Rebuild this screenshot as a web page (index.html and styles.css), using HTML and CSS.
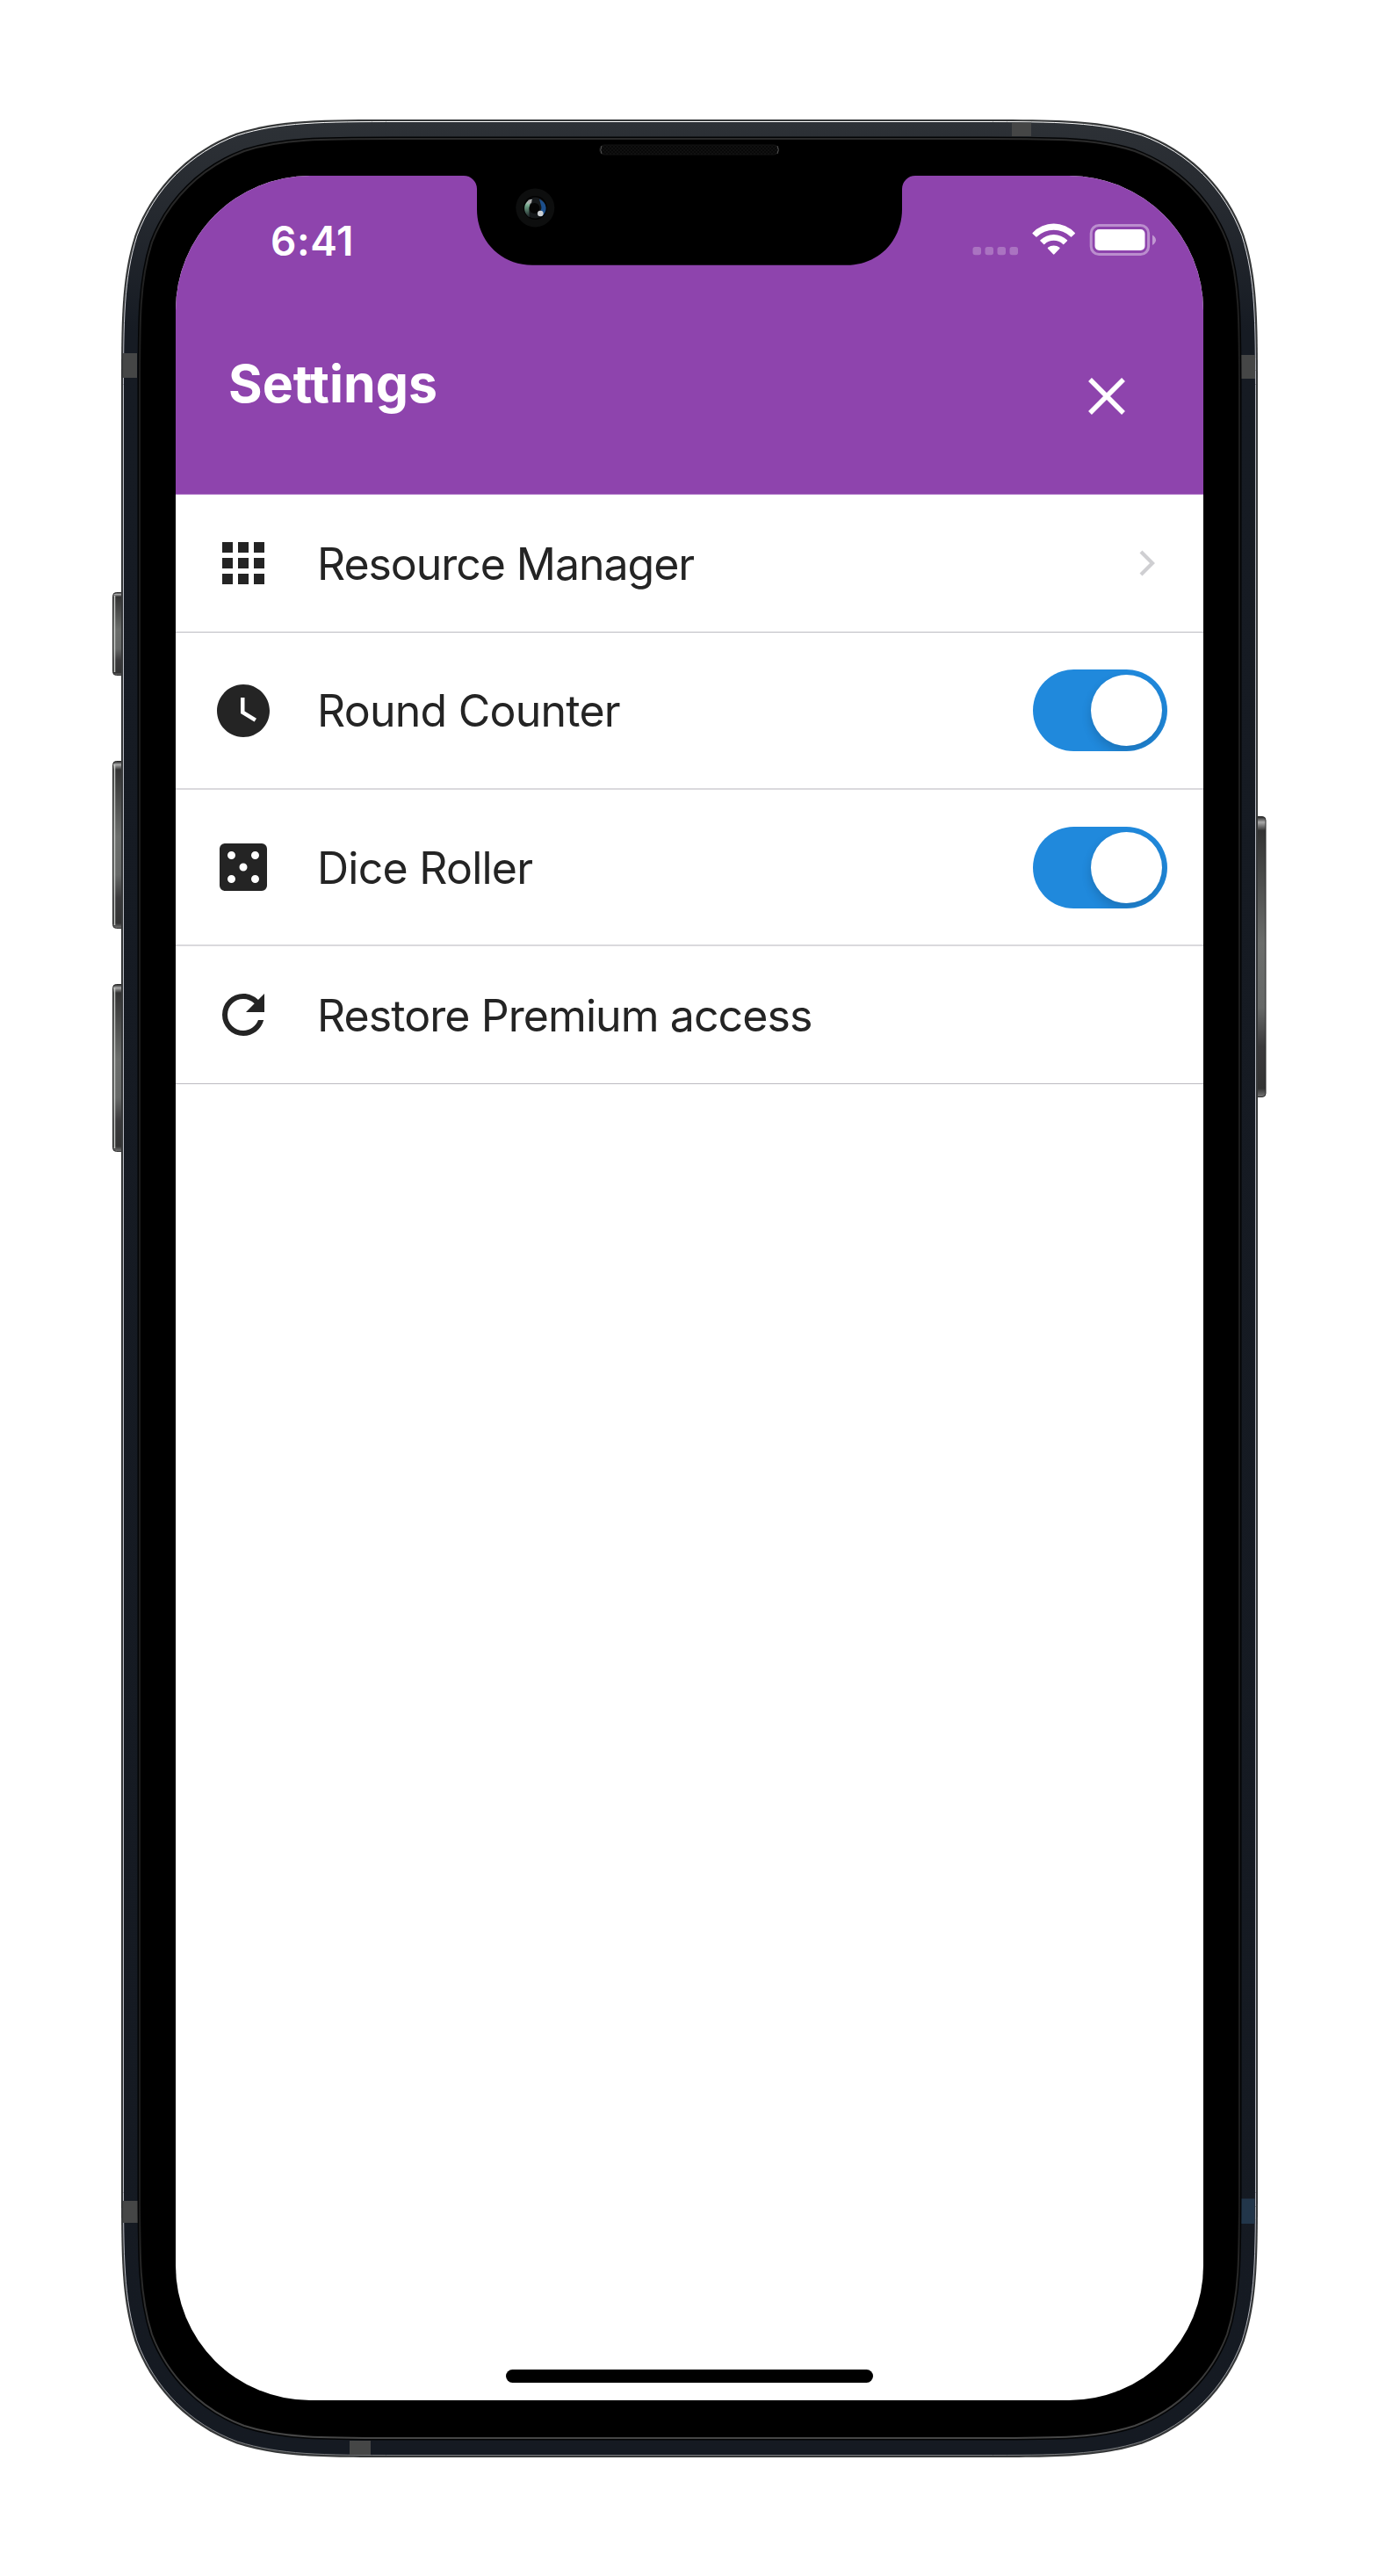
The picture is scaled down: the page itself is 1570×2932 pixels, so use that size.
FILE: index.html
```html
<!DOCTYPE html>
<html lang="en">
<head>
<meta charset="utf-8">
<title>Settings</title>
<link rel="stylesheet" href="styles.css">
</head>
<body>
<main class="device">
  <svg class="chassis" viewBox="126 136 1318 2661" width="1318" height="2661" aria-hidden="true">
    <defs>
      <linearGradient id="body" x1="0" y1="0" x2="0" y2="1">
        <stop offset="0" stop-color="#2d3136"/><stop offset=".035" stop-color="#262a30"/><stop offset=".09" stop-color="#161b23"/><stop offset="1" stop-color="#151a22"/>
      </linearGradient>
      <linearGradient id="key" x1="0" y1="0" x2="0" y2="1">
        <stop offset="0" stop-color="#222"/><stop offset=".02" stop-color="#aaa"/><stop offset=".05" stop-color="#333"/><stop offset=".45" stop-color="#6b6d6b"/><stop offset=".68" stop-color="#666867"/><stop offset=".82" stop-color="#3b3a3c"/><stop offset=".97" stop-color="#333"/><stop offset="1" stop-color="#777"/>
      </linearGradient>
      <linearGradient id="rim" x1="0" y1="0" x2="0" y2="1">
        <stop offset="0" stop-color="#2b2b2b"/><stop offset=".1" stop-color="#1b1b1b"/><stop offset=".9" stop-color="#1b1b1b"/><stop offset="1" stop-color="#464646"/>
      </linearGradient>
      <linearGradient id="shine" x1="0" y1="0" x2="0" y2="1">
        <stop offset="0" stop-color="#fff"/><stop offset=".1" stop-color="#b9bbc4"/><stop offset=".93" stop-color="#b9bbc4"/><stop offset="1" stop-color="#77797c"/>
      </linearGradient>
      <linearGradient id="lensA" x1="0" y1="0" x2="0" y2="1"><stop offset="0" stop-color="#ddd"/><stop offset=".35" stop-color="#6fa488"/><stop offset="1" stop-color="#1a1e24"/></linearGradient>
      <pattern id="mesh" width="4" height="4" patternUnits="userSpaceOnUse"><rect width="4" height="4" fill="#080808"/><path d="M0 0h2v2H0zM2 2h2v2H2z" fill="#101010"/></pattern>
    </defs>
    <g fill="url(#key)" stroke="#2a2a2a">
      <rect x="128.500" y="674.500" width="16" height="94" rx="4"/>
      <rect x="128.500" y="866.500" width="16" height="190" rx="4"/>
      <rect x="128.500" y="1120.500" width="16" height="190" rx="4"/>
      <rect x="1425" y="929.500" width="16" height="319" rx="4"/>
    </g>
    <path d="M130.500 678v87M130.500 870v183M130.500 1124v183" stroke="#c4c6c4" stroke-width="1.500"/>
    <path fill="#363839" d="M138 454C138 362 138 317 153.600 267.400C173.200 213.500 215.500 171.200 269.300 151.600C318.600 136 364.400 136 456 136H1114C1205.600 136 1251.400 136 1300.700 151.600C1354.500 171.200 1396.800 213.500 1416.400 267.400C1432 317 1432 362 1432 454V2479C1432 2571 1432 2616 1416.400 2665.500C1396.800 2719.500 1354.500 2761.800 1300.700 2781.400C1251.400 2797 1205.600 2797 1114 2797H456C364.400 2797 318.600 2797 269.300 2781.400C215.500 2761.800 173.200 2719.500 153.600 2665.500C138 2616 138 2571 138 2479Z"/>
    <path fill="url(#body)" stroke="url(#shine)" stroke-width="1" d="M140.500 454C140.500 362 141 317 156 268.400C175.500 215 217 173.500 270.300 154C319 139 364.400 138.500 456 138.500H1114C1205.600 138.500 1251 139 1299.700 154C1353 173.500 1394.500 215 1414 268.400C1429 317 1429.500 362 1429.500 454V2479C1429.500 2571 1429 2616 1414 2664.500C1394.500 2718 1353 2759.500 1299.700 2779C1251 2794 1205.600 2794.500 1114 2794.500H456C364.400 2794.500 319 2794 270.300 2779C217 2759.500 175.500 2718 156 2664.500C141 2616 140.500 2571 140.500 2479Z"/>
    <g fill="#454646">
      <path d="M140 402h16v28h-16zM140 2505h17v25h-17zM1413 404h16v27h-16zM1152 139.500h22V155h-22zM398 2778h24v16h-24z"/>
      <path fill="#22364a" d="M1413 2502.500h15.500V2531H1413z"/>
    </g>
    <path fill="#000" stroke="#030405" stroke-width="5" d="M159 448C159 364 159 319 173 276C191 228 229.500 190 278 172C321 158 366 158 450 158H1120C1204 158 1249 158 1292 172C1340.500 190 1379 228 1397 276C1411 319 1411 364 1411 448V2485C1411 2569 1411 2614 1397 2657C1379 2705 1340.500 2743 1292 2761C1249 2775 1204 2775 1120 2775H450C366 2775 321 2775 278 2761C229.500 2743 191 2705 173 2657C159 2614 159 2569 159 2485Z"/>
    <path fill="#000" stroke="url(#rim)" stroke-width="2" d="M159 448C159 364 159 319 173 276C191 228 229.500 190 278 172C321 158 366 158 450 158H1120C1204 158 1249 158 1292 172C1340.500 190 1379 228 1397 276C1411 319 1411 364 1411 448V2485C1411 2569 1411 2614 1397 2657C1379 2705 1340.500 2743 1292 2761C1249 2775 1204 2775 1120 2775H450C366 2775 321 2775 278 2761C229.500 2743 191 2705 173 2657C159 2614 159 2569 159 2485Z"/>
    <rect x="682.500" y="165" width="204" height="11" rx="5.500" fill="url(#mesh)" stroke="#131313"/>
    <path d="M685 166q-2.500 4.500 0 9M885 166q2.500 4.500 0 9" fill="none" stroke="#555"/>
  </svg>

  <div class="screen">
    <svg class="notch" viewBox="528 200 514 102" width="514" height="102" aria-hidden="true">
      <path d="M528 200A15 15 0 0 1 543 215V238C543 274 570 301.700 606 301.700H964C1000 301.700 1027 274 1027 238V215A15 15 0 0 1 1042 200Z"/>
      <circle cx="609.300" cy="236.500" r="22" fill="#0d0e0e"/>
      <circle cx="609.300" cy="236.500" r="13.500" fill="#020202"/>
      <circle cx="609.300" cy="236.500" r="12" fill="#15181a"/>
      <path d="M604.500 227C595.500 230 594.500 242 603 247.500C602 240 602 233 606 227Z" fill="url(#lensA)"/>
      <path d="M614 226.500C623.500 231 624 241 616.500 246.500C612 243 618 239 616 234Z" fill="#1c4f8c"/>
      <circle cx="608.500" cy="237" r="6" fill="#050505"/>
      <circle cx="603.200" cy="229.500" r="2.200" fill="#aaa"/>
      <circle cx="615.300" cy="243" r="3.300" fill="#ccd0d4"/>
    </svg>

    <header class="header">
      <div class="status">
        <span class="time">6:41</span>
        <svg class="indicators" viewBox="1107 250 204 44" width="204" height="44" fill="#fff" aria-hidden="true">
          <g opacity=".25"><rect x="1107.500" y="281" width="9.500" height="9.300" rx="2.800"/><rect x="1121.500" y="281" width="9.500" height="9.300" rx="2.800"/><rect x="1135.500" y="281" width="9.500" height="9.300" rx="2.800"/><rect x="1149.500" y="281" width="9.500" height="9.300" rx="2.800"/></g>
          <path d="M1175.600 264.900A33 33 0 0 1 1223.800 264.900Q1224.200 265.400 1223.800 265.900L1220 269.500Q1219.500 270 1219 269.500A28 28 0 0 0 1180.400 269.500Q1179.900 270 1179.400 269.500L1175.600 265.900Q1175.200 265.400 1175.600 264.900Z"/>
          <path d="M1184.400 273.300A22 22 0 0 1 1215 273.300Q1215.500 273.800 1215 274.300L1211.200 278Q1210.700 278.500 1210.200 278A15.300 15.300 0 0 0 1189.200 278Q1188.700 278.500 1188.200 278L1184.400 274.300Q1183.900 273.800 1184.400 273.300Z"/>
          <path d="M1193 281.800A10.500 10.500 0 0 1 1206.400 281.800Q1207 282.400 1206.400 283L1200.400 289.300Q1199.700 290 1199 289.300L1193 283Q1192.400 282.400 1193 281.800Z"/>
          <rect x="1242.200" y="256.500" width="65.400" height="33" rx="9" fill="none" stroke="#fff" stroke-opacity=".4" stroke-width="3"/>
          <rect x="1246.500" y="261" width="57" height="24" rx="5"/>
          <path opacity=".45" d="M1312 267.500Q1316 270 1316 273.300T1312 279Z"/>
        </svg>
      </div>
      <div class="titlebar">
        <h1 class="title">Settings</h1>
        <svg class="close" viewBox="0 0 42 42" width="42" height="42" aria-label="Close"><path d="M2 2L40 40M40 2L2 40" stroke="#fff" stroke-width="5.500"/></svg>
      </div>
    </header>

    <ul class="list">
      <li class="row row-link">
        <svg class="icon" viewBox="0 0 24 24"><path d="M4 4h4v4H4zM10 4h4v4h-4zM16 4h4v4h-4zM4 10h4v4H4zM10 10h4v4h-4zM16 10h4v4h-4zM4 16h4v4H4zM10 16h4v4h-4zM16 16h4v4h-4z"/></svg>
        <span class="label label-resource">Resource Manager</span>
        <svg class="chevron" viewBox="0 0 18 30" width="18" height="30"><path d="M2 2L15 15L2 28" fill="none" stroke="#cfcfd2" stroke-width="4.200"/></svg>
      </li>
      <li class="row row-switch">
        <svg class="icon" viewBox="0 0 24 24"><path d="M12 2C6.500 2 2 6.500 2 12s4.500 10 10 10 10-4.500 10-10S17.500 2 12 2zm4.200 14.200L11 13V7h1.500v5.200l4.500 2.700-.8 1.300z"/></svg>
        <span class="label label-round">Round Counter</span>
        <span class="switch"><span class="knob"></span></span>
      </li>
      <li class="row row-switch row-dice">
        <svg class="icon" viewBox="0 0 24 24"><path fill-rule="evenodd" d="M5 3h14a2 2 0 0 1 2 2v14a2 2 0 0 1-2 2H5a2 2 0 0 1-2-2V5a2 2 0 0 1 2-2zM7.500 6a1.500 1.500 0 1 0 0 3 1.500 1.500 0 0 0 0-3zM16.500 6a1.500 1.500 0 1 0 0 3 1.500 1.500 0 0 0 0-3zM12 10.500a1.500 1.500 0 1 0 0 3 1.500 1.500 0 0 0 0-3zM7.500 15a1.500 1.500 0 1 0 0 3 1.500 1.500 0 0 0 0-3zM16.500 15a1.500 1.500 0 1 0 0 3 1.500 1.500 0 0 0 0-3z"/></svg>
        <span class="label label-dice">Dice Roller</span>
        <span class="switch"><span class="knob"></span></span>
      </li>
      <li class="row row-link">
        <svg class="icon" viewBox="0 0 24 24"><path d="M17.650 6.350C16.200 4.900 14.210 4 12 4A8 8 0 0 0 4 12A8 8 0 0 0 12 20C15.730 20 18.840 17.450 19.730 14H17.650C16.830 16.330 14.610 18 12 18A6 6 0 0 1 6 12A6 6 0 0 1 12 6C13.660 6 15.140 6.690 16.220 7.780L13 11H20V4Z"/></svg>
        <span class="label label-restore">Restore Premium access</span>
      </li>
    </ul>
    <div class="home-bar"></div>
  </div>
</main>
</body>
</html>
```
FILE: styles.css
```css
* { box-sizing: border-box; }

body {
  margin: 0;
  background: #fff;
  font-family: Inter, "Liberation Sans", sans-serif;
  color: #242424;
}

.device {
  position: relative;
  width: 1570px;
  height: 2932px;
  padding: 200px;
}

/* The chassis lies behind the screen */
.chassis {
  position: absolute;
  left: 126px;
  top: 136px;
}

.screen {
  position: relative;
  display: flex;
  flex-direction: column;
  width: 1170px;
  height: 2532px;
  overflow: hidden;
  border-radius: 153px;
  background: #fff;
}

.notch {
  position: absolute;
  left: 328px;
  top: 0;
}

.header {
  height: 363px;
  background: #8e44ad;
  border-bottom: 1px solid #a768c1;
  color: #fff;
}

.status {
  display: flex;
  justify-content: space-between;
  align-items: center;
  height: 94px;
  padding: 50px 59px 0 108px;
}

.indicators { overflow: visible; }

.time {
  font-size: 46px;
  line-height: 44px;
  font-weight: 600;
  letter-spacing: .6px;
  padding-top: 3px;
}

.titlebar {
  display: flex;
  justify-content: space-between;
  padding: 107px 89px 0 60px;
}

.title {
  margin: 0;
  font-size: 59px;
  line-height: 72px;
  font-weight: 700;
}

.close { margin-top: 29px; }

.list {
  margin: 0;
  padding: 0;
  list-style: none;
}

.row {
  display: flex;
  align-items: center;
  padding-left: 41px;
  border-bottom: 1px solid #bcbbc1;
}

.row-link { height: 157px; padding-right: 55px; }

.row-switch {
  height: 179px;
  padding-right: 41px;
  border-bottom: 2px solid #dad9dd;
}

.row-dice { height: 178px; }

.icon {
  flex: none;
  width: 72px;
  height: 72px;
  fill: #242424;
}

.label {
  flex: 1;
  margin-left: 48px;
  padding-top: 1px;
  font-size: 50px;
  line-height: 60px;
  white-space: nowrap;
}

.label-resource { letter-spacing: -1.05px; }
.label-round { letter-spacing: -.75px; }
.label-dice { letter-spacing: -.75px; }
.label-restore { letter-spacing: -.92px; }

.switch {
  display: flex;
  align-items: center;
  justify-content: flex-end;
  width: 153px;
  height: 93px;
  padding: 6px;
  border-radius: 47px;
  overflow: hidden;
  background: #2089dc;
}

.knob {
  width: 81px;
  height: 81px;
  border-radius: 50%;
  background: #fff;
  box-shadow: 0 6px 12px rgba(0, 0, 0, .16);
}

.home-bar {
  width: 418px;
  height: 15px;
  margin: auto auto 20px;
  border-radius: 8px;
  background: #000;
}
```
